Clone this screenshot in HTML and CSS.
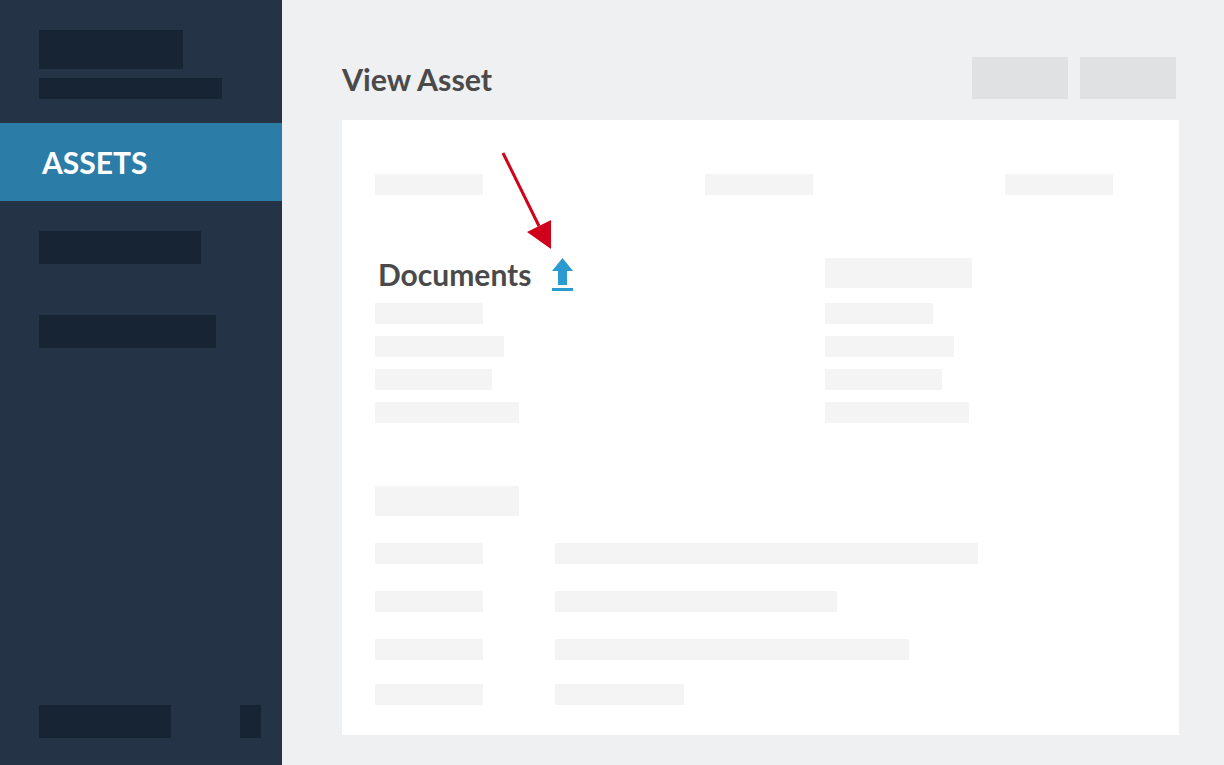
FILE: index.html
```html
<!DOCTYPE html>
<html lang="en">
<head>
<meta charset="utf-8">
<title>View Asset</title>
<link rel="stylesheet" href="styles.css">
</head>
<body>
<div class="app">
  <aside class="sidebar">
    <div class="brand">
      <div class="ph-dark w144 h39"></div>
      <div class="ph-dark w183 h21"></div>
    </div>
    <div class="nav-active">ASSETS</div>
    <div class="nav-items">
      <div class="ph-dark w162 h33"></div>
      <div class="ph-dark w177 h33"></div>
    </div>
    <div class="side-foot">
      <div class="ph-dark w132 h33"></div>
      <div class="ph-dark w21 h33"></div>
    </div>
  </aside>
  <main class="main">
    <header class="top">
      <h1 class="title">View Asset</h1>
      <div class="actions">
        <div class="btn"></div>
        <div class="btn"></div>
      </div>
    </header>
    <section class="card">
      <div class="summary">
        <div class="ph w108 h21"></div>
        <div class="ph w108 h21"></div>
        <div class="ph w108 h21"></div>
      </div>
      <div class="columns">
        <div class="col">
          <div class="doc-head">
            <h2 class="doc-title">Documents</h2>
            <svg class="upload" width="22" height="33" viewBox="0 0 22 33" aria-hidden="true">
              <path d="M10.5 0 L21 13 H15 V27 H6 V13 H0 Z" fill="#2b9ad0"/>
              <rect x="0" y="30" width="21" height="3" fill="#2b9ad0"/>
            </svg>
          </div>
          <div class="ph w108 h21"></div>
          <div class="ph w129 h21"></div>
          <div class="ph w117 h21"></div>
          <div class="ph w144 h21"></div>
        </div>
        <div class="col">
          <div class="ph w147 h30"></div>
          <div class="ph w108 h21"></div>
          <div class="ph w129 h21"></div>
          <div class="ph w117 h21"></div>
          <div class="ph w144 h21"></div>
        </div>
      </div>
      <div class="details">
        <div class="ph w144 h30"></div>
        <div class="rows">
          <div class="ph w108 h21"></div><div class="ph w423 h21"></div>
          <div class="ph w108 h21"></div><div class="ph w282 h21"></div>
          <div class="ph w108 h21"></div><div class="ph w354 h21"></div>
          <div class="ph w108 h21 row-tight"></div><div class="ph w129 h21 row-tight"></div>
        </div>
      </div>
      <svg class="pointer" width="60" height="100" viewBox="0 0 60 100" aria-hidden="true">
        <path d="M11 3 L47 76" stroke="#d0021b" stroke-width="3" fill="none"/>
        <path d="M59 70 V99 L35 82 Z" fill="#d0021b"/>
      </svg>
    </section>
  </main>
</div>
</body>
</html>
```
FILE: styles.css
```css
* { box-sizing: border-box; }
html, body { margin: 0; padding: 0; height: 100%; }
body { font-family: Lato, "Liberation Sans", sans-serif; background: #eff0f2; overflow: hidden; }
.app { display: flex; width: 1224px; height: 765px; }

.sidebar { width: 282px; flex: none; background: #243345; display: flex; flex-direction: column; }
.brand { padding: 30px 0 24px 39px; display: flex; flex-direction: column; gap: 9px; }
.nav-active { height: 78px; background: #2c7ca8; color: #fff; font-size: 30px; font-weight: 700; line-height: 79px; padding-left: 42px; }
.nav-items { padding: 30px 0 0 39px; display: flex; flex-direction: column; gap: 51px; flex: 1; }
.side-foot { display: flex; padding: 0 21px 27px 39px; justify-content: space-between; }
.ph-dark { background: #172433; }

.main { flex: 1; padding: 57px 45px 30px 60px; display: flex; flex-direction: column; }
.top { display: flex; justify-content: space-between; align-items: flex-start; height: 63px; padding-right: 3px; }
.title { margin: 0; font-size: 30.4px; font-weight: 700; color: #4a4a4a; line-height: 44px; }
.actions { display: flex; gap: 12px; }
.btn { width: 96px; height: 42px; background: #e0e1e3; }

.card { position: relative; width: 837px; height: 615px; background: #fff; padding: 54px 33px 0; }
.ph { background: #f4f4f4; }
.summary { display: grid; grid-template-columns: 330px 300px 108px; }
.columns { display: grid; grid-template-columns: 450px 1fr; margin-top: 63px; }
.col { display: flex; flex-direction: column; gap: 12px; }
.doc-head { display: flex; align-items: flex-start; height: 30px; margin-bottom: 3px; padding-left: 3px; }
.col:last-child > .h30 { margin-bottom: 3px; }
.doc-title { margin: 0; font-size: 30px; font-weight: 700; color: #4a4a4a; line-height: 32px; }
.upload { margin-left: 21px; flex: none; }
.details { margin-top: 63px; }
.rows { display: grid; grid-template-columns: 180px 1fr; row-gap: 27px; margin-top: 27px; }
.row-tight { margin-top: -3px; }
.pointer { position: absolute; left: 150px; top: 30px; }

.w21 { width: 21px; } .w108 { width: 108px; } .w117 { width: 117px; } .w129 { width: 129px; }
.w132 { width: 132px; } .w144 { width: 144px; } .w147 { width: 147px; } .w162 { width: 162px; }
.w177 { width: 177px; } .w183 { width: 183px; } .w282 { width: 282px; } .w354 { width: 354px; }
.w423 { width: 423px; }
.h21 { height: 21px; } .h30 { height: 30px; } .h33 { height: 33px; } .h39 { height: 39px; }
```
